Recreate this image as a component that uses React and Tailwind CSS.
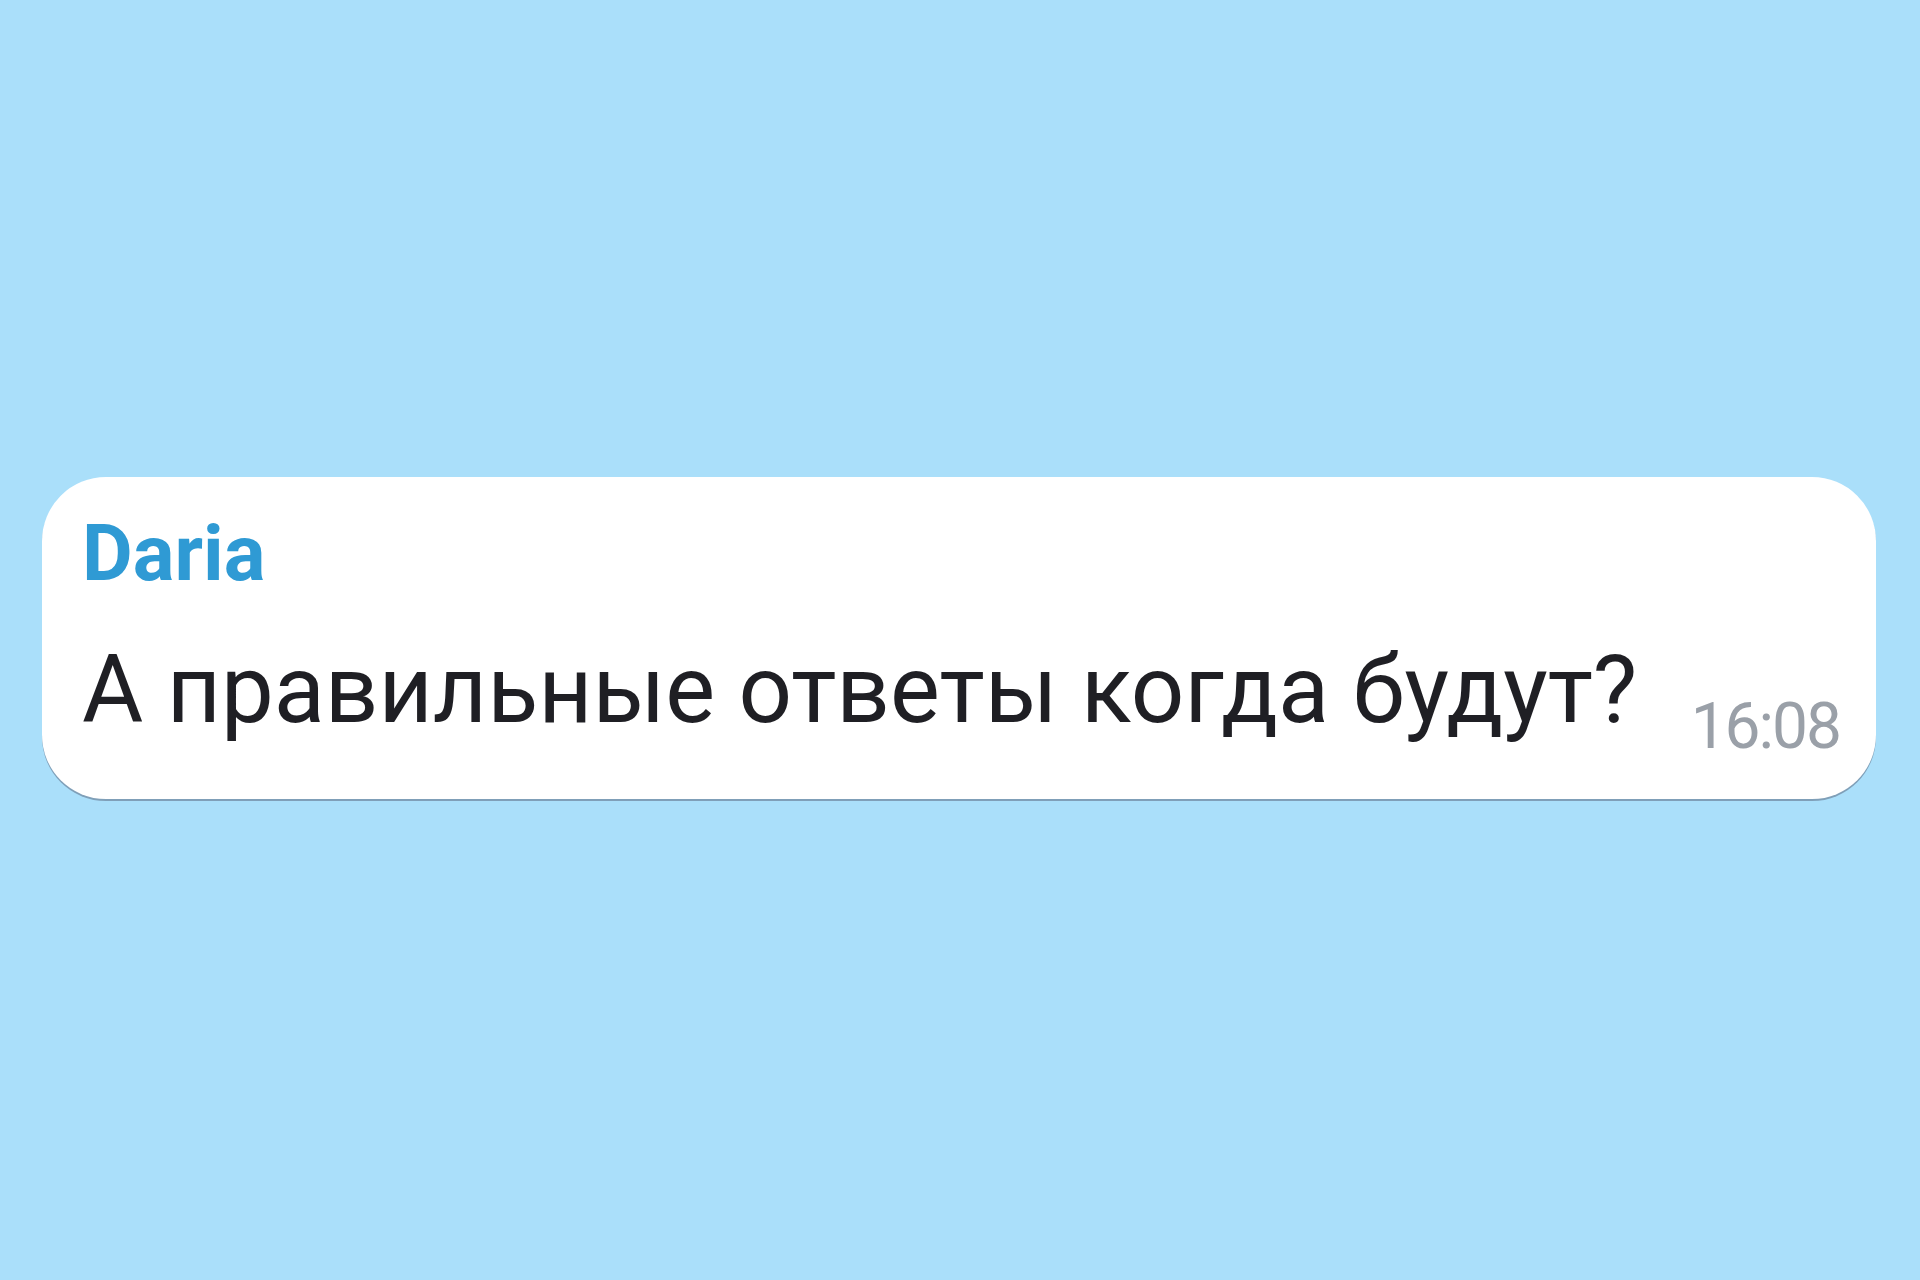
export default function App() {
  return (
    <div className="w-[1920px] h-[1280px] bg-[#aadffa] flex items-center" style={{ fontFamily: 'Roboto, "Noto Sans", sans-serif' }}>
      {/* message bubble */}
      <div className="ml-[42px] w-[1834px] h-[322px] mt-[-4px] bg-white rounded-[64px] shadow-[0_2px_0_#7f9fb8] pl-[40px] pr-[36px] pt-[38px] flex flex-col">
        <div className="text-[#2f9ad4] text-[78px] font-bold leading-none">Daria</div>
        <div className="flex items-end justify-between mt-[50px]">
          <span className="text-[#1f1f24] text-[94px] leading-none">А правильные ответы когда будут?</span>
          <span className="text-[#9aa0a8] text-[64px] leading-none mb-[-22px] tracking-[-2px]">16:08</span>
        </div>
      </div>
    </div>
  );
}
